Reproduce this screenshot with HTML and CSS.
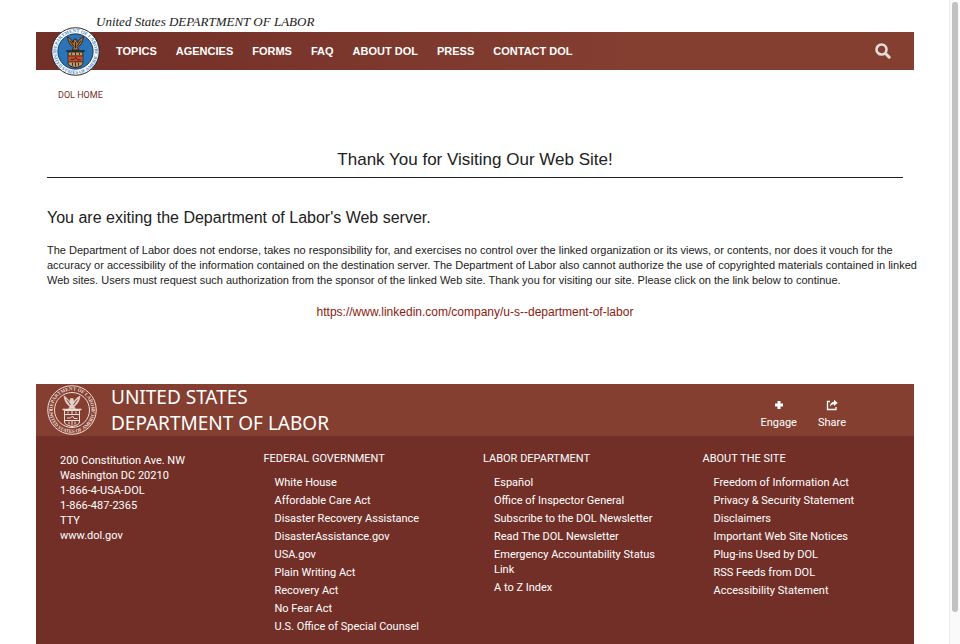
FILE: index.html
```html
<!DOCTYPE html>
<html lang="en">
<head>
<meta charset="utf-8">
<meta name="viewport" content="width=device-width, initial-scale=1">
<title>United States Department of Labor</title>
<link rel="stylesheet" href="styles.css">
</head>
<body>
<div class="page">
  <header class="masthead">
    <p class="site-name">United States DEPARTMENT OF LABOR</p>
    <div class="navbar">
      <a class="seal" href="#" aria-label="Department of Labor home">
        <svg viewBox="0 0 100 100">
          <defs>
            <path id="ring-top" d="M11 50a39 39 0 0 1 78 0"/>
            <path id="ring-bottom" d="M4 50a46 46 0 0 0 92 0"/>
          </defs>
          <circle cx="50" cy="50" r="48.500" fill="#fff" stroke="#222" stroke-width="2"/>
          <circle cx="50" cy="50" r="36" fill="#2c74b8" stroke="#1c3450" stroke-width="2"/>
          <g class="ring-text" fill="#4787c4">
            <text><textPath href="#ring-top" startOffset="50%" text-anchor="middle">DEPARTMENT OF LABOR</textPath></text>
            <text><textPath href="#ring-bottom" startOffset="50%" text-anchor="middle">UNITED STATES OF AMERICA</textPath></text>
          </g>
          <path d="M34 20c1 12 6 18 12 22l-3 5h14l-3-5c6-4 11-10 12-22-6 3-10 7-12 12l-2-7h-5l-2 7c-2-5-6-9-11-12z" fill="#a9743f" stroke="#2a2018" stroke-width="2"/>
          <path d="M39 28l8 12M61 28l-8 12M50 31v12" stroke="#2a2018" stroke-width="2"/>
          <path d="M31 49h38" stroke="#222" stroke-width="3"/>
          <path d="M35 51h30v23q0 6-15 9-15-3-15-9z" fill="#c99a62" stroke="#222" stroke-width="2"/>
          <path d="M36 59h28v12H36z" fill="#d14a2c"/>
          <path d="M36 59h28M36 71h28M42 53v4M50 52v6M58 53v4M40 66h7l4-4 3 5h7M44 73v6M50 72v9M56 73v6" stroke="#38251a" stroke-width="2" fill="none"/>
        </svg>
      </a>
      <nav aria-label="Main">
        <ul class="nav-list">
          <li><a href="#">TOPICS</a></li>
          <li><a href="#">AGENCIES</a></li>
          <li><a href="#">FORMS</a></li>
          <li><a href="#">FAQ</a></li>
          <li><a href="#">ABOUT DOL</a></li>
          <li><a href="#">PRESS</a></li>
          <li><a href="#">CONTACT DOL</a></li>
        </ul>
      </nav>
      <button class="search" type="button" aria-label="Search">
        <svg viewBox="0 0 16 16" fill="none" stroke="#e2ddd7"><circle cx="6.500" cy="6.500" r="5" stroke-width="2.600"/><path d="M10.500 10.500l3.700 3.700" stroke-width="3" stroke-linecap="round"/></svg>
      </button>
    </div>
  </header>

  <main>
    <a class="breadcrumb" href="#">DOL HOME</a>
    <h1>Thank You for Visiting Our Web Site!</h1>
    <h2>You are exiting the Department of Labor's Web server.</h2>
    <p class="notice">The Department of Labor does not endorse, takes no responsibility for, and exercises no control over the linked organization or its views, or contents, nor does it vouch for the accuracy or accessibility of the information contained on the destination server. The Department of Labor also cannot authorize the use of copyrighted materials contained in linked Web sites. Users must request such authorization from the sponsor of the linked Web site. Thank you for visiting our site. Please click on the link below to continue.</p>
    <p class="exit"><a href="#">https://www.linkedin.com/company/u-s--department-of-labor</a></p>
  </main>

  <footer>
    <div class="footer-brand">
      <svg class="footer-seal" viewBox="0 0 100 100" fill="none" stroke="#f0dfd9" aria-hidden="true">
        <circle cx="50" cy="50" r="48.500" stroke-width="2"/>
        <circle cx="50" cy="50" r="35" stroke-width="2"/>
        <g class="ring-text" fill="#f0dfd9" stroke="none">
          <text><textPath href="#ring-top" startOffset="50%" text-anchor="middle">DEPARTMENT OF LABOR</textPath></text>
          <text><textPath href="#ring-bottom" startOffset="50%" text-anchor="middle">UNITED STATES OF AMERICA</textPath></text>
        </g>
        <path d="M34 22c1 11 6 17 12 21l-3 4h14l-3-4c6-4 11-10 12-21-6 3-10 7-12 12l-2-7h-5l-2 7c-2-5-6-9-11-12z" fill="#e5cec6" stroke-width="1"/>
        <path d="M39 29l8 11M61 29l-8 11" stroke="#843f31" stroke-width="2"/>
        <path d="M31 49h38" stroke-width="3"/>
        <path d="M35 51h30v23q0 6-15 9-15-3-15-9zM36 59h28M36 71h28M42 53v4M50 52v6M58 53v4M40 66h7l4-4 3 5h7M44 73v6M50 72v9M56 73v6" stroke-width="2"/>
      </svg>
      <p class="footer-name">UNITED STATES<br>DEPARTMENT OF LABOR</p>
      <div class="actions">
        <a href="#"><svg viewBox="0 0 12 12" fill="#fff"><path d="M4.500 2h3v2.500H10v3H7.500V10h-3V7.500H2v-3h2.500z"/></svg>Engage</a>
        <a href="#"><svg viewBox="0 0 12 12" fill="none" stroke="#fff"><path d="M4 2.500H1.500v8H10V8" stroke-width="1.300"/><path d="M8 .8L11.700 4 8 7V5.200C6 5.200 4.800 6 4 8c-.2-3 1.300-5 4-5.300z" fill="#fff" stroke="none"/></svg>Share</a>
      </div>
    </div>
    <div class="footer-body">
      <address>200 Constitution Ave. NW<br>Washington DC 20210<br>1-866-4-USA-DOL<br>1-866-487-2365<br>TTY<br><a href="#">www.dol.gov</a></address>
      <section>
        <h3>FEDERAL GOVERNMENT</h3>
        <ul>
          <li><a href="#">White House</a></li>
          <li><a href="#">Affordable Care Act</a></li>
          <li><a href="#">Disaster Recovery Assistance</a></li>
          <li><a href="#">DisasterAssistance.gov</a></li>
          <li><a href="#">USA.gov</a></li>
          <li><a href="#">Plain Writing Act</a></li>
          <li><a href="#">Recovery Act</a></li>
          <li><a href="#">No Fear Act</a></li>
          <li><a href="#">U.S. Office of Special Counsel</a></li>
        </ul>
      </section>
      <section>
        <h3>LABOR DEPARTMENT</h3>
        <ul>
          <li><a href="#">Español</a></li>
          <li><a href="#">Office of Inspector General</a></li>
          <li><a href="#">Subscribe to the DOL Newsletter</a></li>
          <li><a href="#">Read The DOL Newsletter</a></li>
          <li><a href="#">Emergency Accountability Status Link</a></li>
          <li><a href="#">A to Z Index</a></li>
        </ul>
      </section>
      <section>
        <h3>ABOUT THE SITE</h3>
        <ul>
          <li><a href="#">Freedom of Information Act</a></li>
          <li><a href="#">Privacy &amp; Security Statement</a></li>
          <li><a href="#">Disclaimers</a></li>
          <li><a href="#">Important Web Site Notices</a></li>
          <li><a href="#">Plug-ins Used by DOL</a></li>
          <li><a href="#">RSS Feeds from DOL</a></li>
          <li><a href="#">Accessibility Statement</a></li>
        </ul>
      </section>
    </div>
  </footer>
</div>
<div class="scroll-track" aria-hidden="true"><div class="scroll-thumb"></div></div>
</body>
</html>
```
FILE: styles.css
```css
* { box-sizing: border-box; }

body {
  margin: 0;
  padding: 0 46px 0 36px;
  background: #fff;
  color: #212121;
  font: 11px/15px "Liberation Sans", Arial, sans-serif;
}

h1, h2, h3, p, ul { margin: 0; padding: 0; font-weight: normal; }
ul { list-style: none; }
a { color: inherit; text-decoration: none; }

.page {
  display: flex;
  flex-direction: column;
  min-height: 100vh;
}

.site-name {
  padding: 12px 0 0 60px;
  font: italic 13px/20px "Liberation Serif", serif;
}

.navbar {
  display: flex;
  align-items: center;
  height: 38px;
  padding: 0 23px 0 15px;
  background: linear-gradient(90deg, #722f28, #843f31 70%);
}

.seal { width: 49px; height: 49px; margin-right: 16px; }
.seal svg { display: block; }

.ring-text { font: bold 10px "Liberation Serif", serif; }

.nav-list {
  display: flex;
  gap: 19px;
  color: #fff;
  font-weight: bold;
}

.search {
  width: 16px;
  height: 16px;
  margin-left: auto;
  padding: 0;
  border: 0;
  background: none;
}
.search svg { display: block; }

main { padding: 18px 11px 64px; }

.breadcrumb {
  display: block;
  margin-left: 11px;
  color: #722f28;
  font-size: 9px;
}

.breadcrumb, footer { font-family: Roboto, Arial, sans-serif; }

h1 {
  margin-top: 46px;
  padding-bottom: 7px;
  border-bottom: 1px solid #212121;
  font-size: 17px;
  line-height: 21px;
  text-align: center;
}

h2 {
  margin: 29px 0 14px;
  font-size: 16px;
  line-height: 22px;
}

/* The notice runs a little into the right gutter. */
.notice { margin-right: -22px; }

.exit {
  margin-top: 17px;
  color: #8b1a10;
  font-size: 12px;
  text-align: center;
}

footer {
  flex: 1;
  background: #722f28;
  color: #fff;
}

.footer-brand {
  display: flex;
  align-items: center;
  height: 52px;
  padding: 0 68px 0 11px;
  background: #843f31;
}

.footer-seal { width: 50px; height: 50px; margin-right: 14px; }

.footer-name {
  font: 19px/26px "Noto Sans", sans-serif;
}

.actions {
  display: flex;
  gap: 21px;
  margin-left: auto;
  padding-top: 8px;
}
.actions a {
  display: flex;
  flex-direction: column;
  align-items: center;
  gap: 4px;
}
.actions svg { width: 12px; height: 12px; }

.footer-body {
  display: grid;
  grid-template-columns: repeat(4, 1fr);
  padding-bottom: 8px;
}

address {
  padding: 17px 0 0 24px;
  font-style: normal;
}

section { padding: 15px 32px 0 8px; }
h3 { font-size: 11px; }
section ul { padding: 9px 0 0 11px; }
section li { margin-bottom: 3px; }

.scroll-track {
  position: fixed;
  inset: 0 0 0 auto;
  width: 11px;
  padding: 2px 1px 0 2px;
  border-left: 1px solid #ebebeb;
  background: #fafafa;
}
.scroll-thumb {
  width: 6px;
  height: 95%;
  border-radius: 3px;
  background: #c1c1c1;
}
```
